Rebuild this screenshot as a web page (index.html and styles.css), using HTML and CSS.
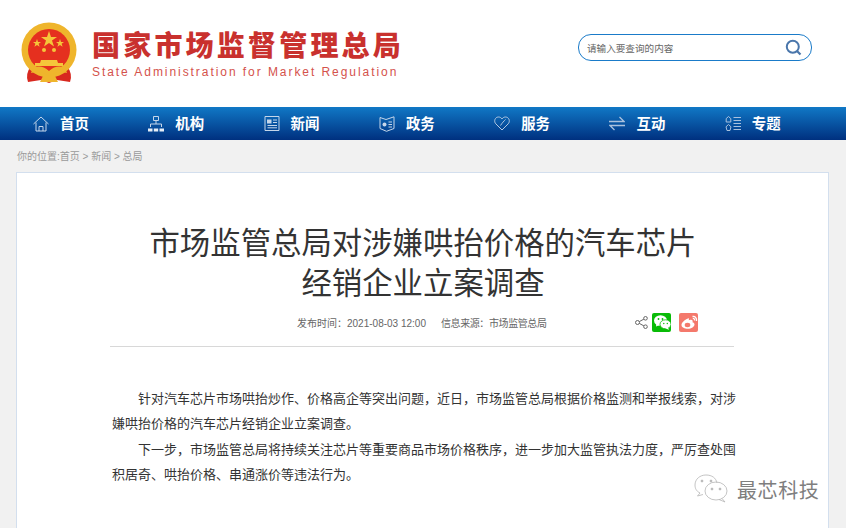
FILE: index.html
```html
<!DOCTYPE html>
<html lang="zh-CN">

<head>
    <meta charset="UTF-8">
    <title>市场监管总局对涉嫌哄抬价格的汽车芯片经销企业立案调查</title>
    <link rel="stylesheet" href="styles.css">
</head>

<body>
    <header class="top">
        <div class="logo">
            <svg class="emblem" width="56" height="62" viewBox="0 0 56 62">
                <path d="M10 44 Q4 52 7 60 L20 58 L28 61 L36 58 L49 60 Q52 52 46 44 Z" fill="#d8281f"/>
                <circle cx="28" cy="28" r="27.5" fill="#efb52c"/>
                <circle cx="28" cy="28" r="21" fill="#e5301f"/>
                <path d="M28 9 L30 15 L36 15 L31 18.5 L33 24.5 L28 21 L23 24.5 L25 18.5 L20 15 L26 15 Z" fill="#f5c63a"/>
                <path d="M16 17 l1 3 3 0 -2.400 1.800 1 3 -2.600 -1.800 -2.600 1.800 1 -3 -2.400 -1.800 3 0 Z" fill="#f5c63a"/>
                <path d="M39 17 l1 3 3 0 -2.400 1.800 1 3 -2.600 -1.800 -2.600 1.800 1 -3 -2.400 -1.800 3 0 Z" fill="#f5c63a"/>
                <circle cx="23" cy="28" r="2" fill="#f5c63a"/>
                <circle cx="33" cy="28" r="2" fill="#f5c63a"/>
                <path d="M20 38 h16 l1 3 h5 v3 H14 v-3 h5 Z" fill="#f5c63a"/>
                <path d="M12 46 Q20 42 28 49 Q36 42 44 46 L46 51 Q36 48 28 54 Q20 48 10 51 Z" fill="#efb52c"/>
                <path d="M22 54 h12 l3 6 H19 Z" fill="#efb52c"/>
            </svg>
            <div class="logo-text">
                <div class="logo-cn">国家市场监督管理总局</div>
                <div class="logo-en">State Administration for Market Regulation</div>
            </div>
        </div>
        <div class="search">
            <span class="search-hint">请输入要查询的内容</span>
            <svg width="17" height="17" viewBox="0 0 17 17">
                <circle cx="7.800" cy="7.800" r="6" fill="none" stroke="#4a76ab" stroke-width="2"/>
                <path d="M12 12 L15.500 15.500" stroke="#4a76ab" stroke-width="2.200"/>
            </svg>
        </div>
    </header>

    <nav class="nav">
        <a class="nav-item">
            <svg width="16" height="16" viewBox="0 0 16 16" fill="none" stroke="#c5d6ea">
                <path d="M.5 8 L8 1 L15.500 8 M3 6.500 V15 H13 V6.500 M6 15 V10.500 H10 V15"/>
            </svg>
            <span>首页</span>
        </a>
        <a class="nav-item">
            <svg width="16" height="16" viewBox="0 0 16 16" fill="none" stroke="#c5d6ea">
                <path d="M5.500 .5 H10.500 V4.500 H5.500 Z M8 4.500 V8 M2.500 11 V8 H13.500 V11"/>
                <path d="M0 12.500 H4.500 V15.500 H0 Z M5.800 12.500 H10.200 V15.500 H5.800 Z M11.500 12.500 H16 V15.500 H11.500 Z" fill="#e6eef7" stroke="none"/>
            </svg>
            <span>机构</span>
        </a>
        <a class="nav-item">
            <svg width="15" height="15" viewBox="0 0 15 15" fill="none" stroke="#c5d6ea">
                <path d="M.5 .5 H14.500 V14.500 H.5 Z M8.500 4 H12.500 M8.500 6.500 H12.500 M3 9.500 H12.500 M3 11.800 H12.500"/>
                <path d="M2.500 3.500 H7 V7.500 H2.500 Z" fill="#c5d6ea" stroke="none"/>
            </svg>
            <span>新闻</span>
        </a>
        <a class="nav-item">
            <svg width="15" height="16" viewBox="0 0 15 16" fill="none" stroke="#c5d6ea">
                <path d="M.5 1.500 L6.500 3.500 L14.500 .8 V12.500 L7 15.300 L.5 12.500 Z"/>
                <path d="M9 6 H12.500 M9 8.500 H12.500 M9 11 H12.500"/>
                <circle cx="5" cy="8.500" r="2" fill="#c5d6ea" stroke="none"/>
            </svg>
            <span>政务</span>
        </a>
        <a class="nav-item">
            <svg width="16" height="15" viewBox="0 0 16 15" fill="none" stroke="#b4c9e2">
                <path d="M8 14 L1.800 7.800 C-.5 5.300 1 1 4.500 1 C6 1 7.200 1.700 8 3 C8.800 1.700 10 1 11.500 1 C15 1 16.500 5.300 14.200 7.800 Z M11.500 3.500 C10 5 8 7 6.500 9.500"/>
            </svg>
            <span>服务</span>
        </a>
        <a class="nav-item">
            <svg width="16" height="15" viewBox="0 0 16 15" fill="none" stroke="#a9c1de" stroke-width="1.300">
                <path d="M0 5.500 H15 L10.500 1 M16 9.500 H1 L5.500 14"/>
            </svg>
            <span>互动</span>
        </a>
        <a class="nav-item">
            <svg width="16" height="15" viewBox="0 0 16 15" fill="none" stroke="#a9c1de">
                <path d="M3.500 .5 L5.800 2.600 V6 H1.200 V2.600 Z M3.500 8.500 L6 10.800 L5 14.500 H2 L1 10.800 Z"/>
                <path d="M8.500 1.500 H16 M8.500 4.500 H16 M8.500 7.500 H16 M8.500 10.500 H16 M8.500 13.500 H16"/>
            </svg>
            <span>专题</span>
        </a>
    </nav>

    <main class="main">
        <div class="crumb">你的位置:首页 &gt; 新闻 &gt; 总局</div>
        <article class="card">
            <h1 class="title">市场监管总局对涉嫌哄抬价格的汽车芯片<br>经销企业立案调查</h1>
            <div class="meta">
                <span class="meta-time">发布时间：2021-08-03 12:00</span>
                <span class="meta-source">信息来源：市场监管总局</span>
                <div class="share">
                    <svg width="13" height="13" viewBox="0 0 13 13" fill="none" stroke="#666">
                        <circle cx="2.500" cy="6.500" r="2"/>
                        <circle cx="10.500" cy="2.300" r="1.800"/>
                        <circle cx="10.500" cy="10.700" r="1.800"/>
                        <path d="M4.300 5.600 L8.900 3.100 M4.300 7.400 L8.900 9.900"/>
                    </svg>
                    <span class="share-btn wechat">
                        <svg width="17" height="15" viewBox="0 0 17 15">
                            <ellipse cx="6.500" cy="5.500" rx="6.500" ry="5.300" fill="#fff"/>
                            <path d="M2.500 8.500 L2 11.500 L5.500 10 Z" fill="#fff"/>
                            <ellipse cx="11.500" cy="9.300" rx="5.500" ry="4.500" fill="#fff" stroke="#09bb07" stroke-width=".8"/>
                            <path d="M14 12.500 L15 14.800 L11.500 13.500 Z" fill="#fff"/>
                            <circle cx="4.500" cy="4" r=".9" fill="#09bb07"/>
                            <circle cx="8.500" cy="4" r=".9" fill="#09bb07"/>
                            <circle cx="9.800" cy="8.500" r=".7" fill="#09bb07"/>
                            <circle cx="13.300" cy="8.500" r=".7" fill="#09bb07"/>
                        </svg>
                    </span>
                    <span class="share-btn weibo">
                        <svg width="17" height="14" viewBox="0 0 17 14">
                            <path d="M7 3.500 C3.500 5 .5 7.500 .5 10 C.5 12.500 3.800 13.800 6.800 13.800 C10.500 13.800 13.500 11.500 13.500 9.500 C13.500 8 12 7.500 11.500 7.300 C12 5.800 11.500 4.500 9.500 4.800 L7.800 5.300 C8 3.500 8 3 7 3.500 Z" fill="#fff"/>
                            <ellipse cx="6.500" cy="10" rx="2.800" ry="2.200" fill="#f4796c"/>
                            <path d="M11.500 1.500 C14 1 16 3 15.500 6 M11.800 3.500 C13 3.300 13.800 4.200 13.600 5.500" fill="none" stroke="#fff" stroke-width="1.300"/>
                        </svg>
                    </span>
                </div>
            </div>
            <div class="content">
                <p>针对汽车芯片市场哄抬炒作、价格高企等突出问题，近日，市场监管总局根据价格监测和举报线索，对涉嫌哄抬价格的汽车芯片经销企业立案调查。</p>
                <p>下一步，市场监管总局将持续关注芯片等重要商品市场价格秩序，进一步加大监管执法力度，严厉查处囤积居奇、哄抬价格、串通涨价等违法行为。</p>
            </div>
        </article>
    </main>

    <div class="watermark">
        <svg width="34" height="30" viewBox="0 0 34 30" fill="none" stroke="#b5b5b5" stroke-width=".8">
            <path d="M6 19 C2 17 1 14 1 11 C1 5 6 1 12 1 C18 1 22 4 23 9"/>
            <path d="M6 19 L3.500 22 L9 20.500"/>
            <ellipse cx="22" cy="17" rx="11" ry="9"/>
            <path d="M28 24.500 L31 28 L25 25.500"/>
            <circle cx="8" cy="7" r="1" fill="#b5b5b5"/>
            <circle cx="17" cy="7" r="1" fill="#b5b5b5"/>
            <circle cx="18" cy="15" r="1" fill="#b5b5b5"/>
            <circle cx="26" cy="15" r="1" fill="#b5b5b5"/>
        </svg>
        <span>最芯科技</span>
    </div>
</body>

</html>
```

FILE: styles.css
```css
html {
    overflow: hidden;
}

body {
    margin: 0;
    height: 528px;
    position: relative;
    overflow: hidden;
    background-color: #f1f1f1;
    font-family: "Liberation Sans", "Noto Sans CJK SC", sans-serif;
}

.top {
    height: 107px;
    background-color: #fff;
    display: flex;
    justify-content: space-between;
    align-items: center;
    padding: 0 34px 0 21px;
    box-sizing: border-box;
}

.logo {
    display: flex;
    align-items: center;
    gap: 15px;
    margin-top: -2px;
}

.emblem {
    display: block;
    filter: blur(.3px);
}

.logo-text {
    margin-top: 4px;
}

.logo-cn {
    color: #c9312e;
    font-size: 28px;
    font-weight: 900;
    line-height: 36px;
    letter-spacing: 3.200px;
    white-space: nowrap;
}

.logo-en {
    color: #d4524c;
    font-size: 12px;
    line-height: 15px;
    letter-spacing: 1.940px;
    white-space: nowrap;
}

.search {
    width: 234px;
    height: 27px;
    box-sizing: border-box;
    border: 1px solid #1a7bc9;
    border-radius: 13px;
    display: flex;
    align-items: center;
    justify-content: space-between;
    padding: 0 9px 0 8px;
    margin-top: -12px;
}

.search-hint {
    color: #666;
    font-size: 9.600px;
}

.nav {
    height: 33px;
    background: linear-gradient(#1078c6, #00307f);
    display: flex;
    padding-left: 33px;
}

.nav-item {
    width: 115.300px;
    display: flex;
    align-items: center;
    gap: 11px;
    color: #fff;
    font-size: 14.400px;
    font-weight: 700;
}

.nav-item span {
    margin-top: -2px;
}

.nav-item svg {
    width: 16px;
    flex-shrink: 0;
}

.main {
    padding: 0 16px;
}

.crumb {
    height: 32px;
    padding-left: 1px;
    color: #9a9a9a;
    font-size: 10px;
    line-height: 34px;
}

.card {
    background-color: #fff;
    border: 1px solid #d3dfee;
    border-bottom: none;
    width: 813px;
    height: 356px;
    box-sizing: border-box;
    padding: 50px 93px 0 95px;
}

.title {
    margin: 0 0 0 -1px;
    color: #333;
    font-size: 30.400px;
    font-weight: 400;
    line-height: 40px;
    text-align: center;
}

.meta {
    height: 43px;
    margin: 1px 0 0 -2px;
    border-bottom: 1px solid #d8d8d8;
    display: flex;
    align-items: center;
    padding: 0 36px 6px 187px;
    color: #666;
    font-size: 10px;
    width: 624px;
    box-sizing: border-box;
}

.meta-source {
    margin-left: 15px;
    letter-spacing: -.4px;
}

.share {
    margin-left: auto;
    display: flex;
    align-items: center;
    gap: 6px;
}

.share svg:first-child {
    margin-right: -2px;
}

.share-btn {
    width: 19px;
    height: 19px;
    border-radius: 2px;
    display: flex;
    align-items: center;
    justify-content: center;
}

.wechat {
    background-color: #09bb07;
}

.weibo {
    background-color: #f4796c;
    margin-left: 2px;
}

.content {
    margin-top: 39px;
    width: 624px;
    color: #333;
    font-size: 13px;
    line-height: 25.300px;
}

.content p {
    margin: 0;
    text-indent: 26px;
}

.watermark {
    position: absolute;
    left: 694px;
    top: 474px;
    display: flex;
    align-items: center;
    gap: 9px;
    color: #7e7e7e;
    font-size: 20px;
    letter-spacing: .6px;
}
```
